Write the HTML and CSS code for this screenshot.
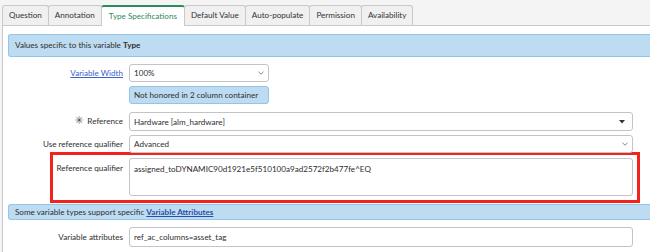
FILE: index.html
```
<!DOCTYPE html>
<html>
<head>
    <title>Variable - Type Specifications</title>
    <meta name="viewport" content="width=device-width, initial-scale=1">
    <link rel="stylesheet" href="styles.css">
</head>
<body>
    <div class="tabs">
        <div class="tab">Question</div>
        <div class="tab">Annotation</div>
        <div class="tab active">Type Specifications</div>
        <div class="tab">Default Value</div>
        <div class="tab">Auto-populate</div>
        <div class="tab">Permission</div>
        <div class="tab">Availability</div>
    </div>

    <div class="panel">
        <div class="section-bar">Values specific to this variable <b>Type</b></div>

        <div class="row row-first">
            <div class="label"><a href="#" class="link">Variable Width</a></div>
            <div class="field field-small">
                <span>100%</span>
                <svg class="chevron" width="6" height="4" viewBox="0 0 6 4"><path d="M0.5 0.8 L3 3.2 L5.5 0.8" fill="none" stroke="#777" stroke-width="0.9"/></svg>
            </div>
        </div>
        <div class="row row-note">
            <div class="label"></div>
            <div class="note">Not honored in 2 column container</div>
        </div>

        <div class="row row-ref">
            <div class="label"><span class="mandatory">&#10035;</span>Reference</div>
            <div class="field">
                <span>Hardware [alm_hardware]</span>
                <svg class="caret" width="6" height="4" viewBox="0 0 6 4"><path d="M0 0 L6 0 L3 3.5 Z" fill="#333"/></svg>
            </div>
        </div>
        <div class="row row-use">
            <div class="label">Use reference qualifier</div>
            <div class="field">
                <span>Advanced</span>
                <svg class="chevron" width="6" height="4" viewBox="0 0 6 4"><path d="M0.5 0.8 L3 3.2 L5.5 0.8" fill="none" stroke="#777" stroke-width="0.9"/></svg>
            </div>
        </div>

        <div class="row highlight">
            <div class="label label-top">Reference qualifier</div>
            <div class="field textarea">assigned_toDYNAMIC90d1921e5f510100a9ad2572f2b477fe^EQ</div>
        </div>

        <div class="section-bar section-bar-small">Some variable types support specific <a href="#" class="link-bold">Variable Attributes</a></div>

        <div class="row row-attrs">
            <div class="label">Variable attributes</div>
            <div class="field field-tall">ref_ac_columns=asset_tag</div>
        </div>
    </div>
</body>
</html>
```

FILE: styles.css
```
body {
    font-family: 'Lato', 'Liberation Sans', sans-serif;
    font-size: 8.1px;
    color: #2e2e2e;
    margin: 0;
    padding-top: 5px;
    background-color: #f4f4f5;
    height: 247px;
    overflow: hidden;
}
.tabs {
    display: flex;
    padding-left: 2px;
    height: 20px;
}
.tab {
    height: 19px;
    line-height: 19px;
    padding: 0 6px;
    background-color: #f0f0f1;
    border: 1px solid #c9c9cc;
    border-bottom: none;
    border-radius: 3px 3px 0 0;
    margin-right: -1px;
    color: #333;
    white-space: nowrap;
}
.tab.active {
    background-color: #ffffff;
    border-top: 2px solid #2b8a5e;
    height: 19px;
    line-height: 18px;
    color: #2b8a5e;
    position: relative;
    z-index: 1;
    margin-bottom: -1px;
    padding: 0 7px;
}
.panel {
    margin-left: 2px;
    background-color: #ffffff;
    border-top: 1px solid #c9c9cc;
    border-left: 1px solid #c9c9cc;
    height: 218px;
    padding-top: 8px;
}
.section-bar {
    margin-left: 5px;
    height: 21px;
    line-height: 21px;
    padding-left: 6px;
    background-color: #bddcf1;
    border: 1px solid #93c5ea;
    border-right: none;
    border-radius: 3px 0 0 3px;
}
.section-bar-small {
    height: 14px;
    line-height: 14px;
    margin-top: 1px;
}
.row {
    display: flex;
    gap: 6px;
}
.label {
    width: 120px;
    flex-shrink: 0;
    text-align: right;
    line-height: 18px;
    white-space: nowrap;
}
.link {
    color: #3a62c9;
    text-decoration: underline;
}
.link-bold {
    color: #2a4ea6;
    font-weight: bold;
    text-decoration: underline;
}
.mandatory {
    font-family: 'DejaVu Sans', sans-serif;
    font-size: 11px;
    line-height: 10px;
    color: #555;
    margin-right: 4px;
}
.field {
    width: 504px;
    height: 18px;
    box-sizing: border-box;
    border: 1px solid #c3c4c7;
    border-radius: 3px;
    padding: 0 4px;
    line-height: 16px;
    display: flex;
    justify-content: space-between;
    align-items: center;
    background-color: #ffffff;
    white-space: nowrap;
}
.field-small {
    width: 140px;
}
.field-tall {
    height: 20px;
    line-height: 18px;
}
.row-first {
    margin-top: 7px;
}
.row-note {
    margin-top: 4px;
}
.note {
    width: 140px;
    height: 18px;
    box-sizing: border-box;
    line-height: 16px;
    padding-left: 4px;
    background-color: #bddcf1;
    border: 1px solid #93c5ea;
    border-radius: 3px;
    white-space: nowrap;
}
.row-ref {
    margin-top: 8px;
}
.row-ref .field {
    height: 19px;
}
.caret {
    margin-right: 3px;
}
.row-use {
    margin-top: 4px;
}
.highlight {
    margin-top: -1px;
    margin-left: 47px;
    width: 582px;
    height: 41px;
    border: 3px solid #f2231c;
    padding: 3px 2px 1px 0;
}
.highlight .label {
    width: 70px;
}
.label-top {
    line-height: 16px;
    padding-top: 2px;
}
.textarea {
    height: 38px;
    align-items: flex-start;
    padding-top: 2px;
}
.row-attrs {
    margin-top: 7px;
}
.row-attrs .label {
    line-height: 20px;
}
```
